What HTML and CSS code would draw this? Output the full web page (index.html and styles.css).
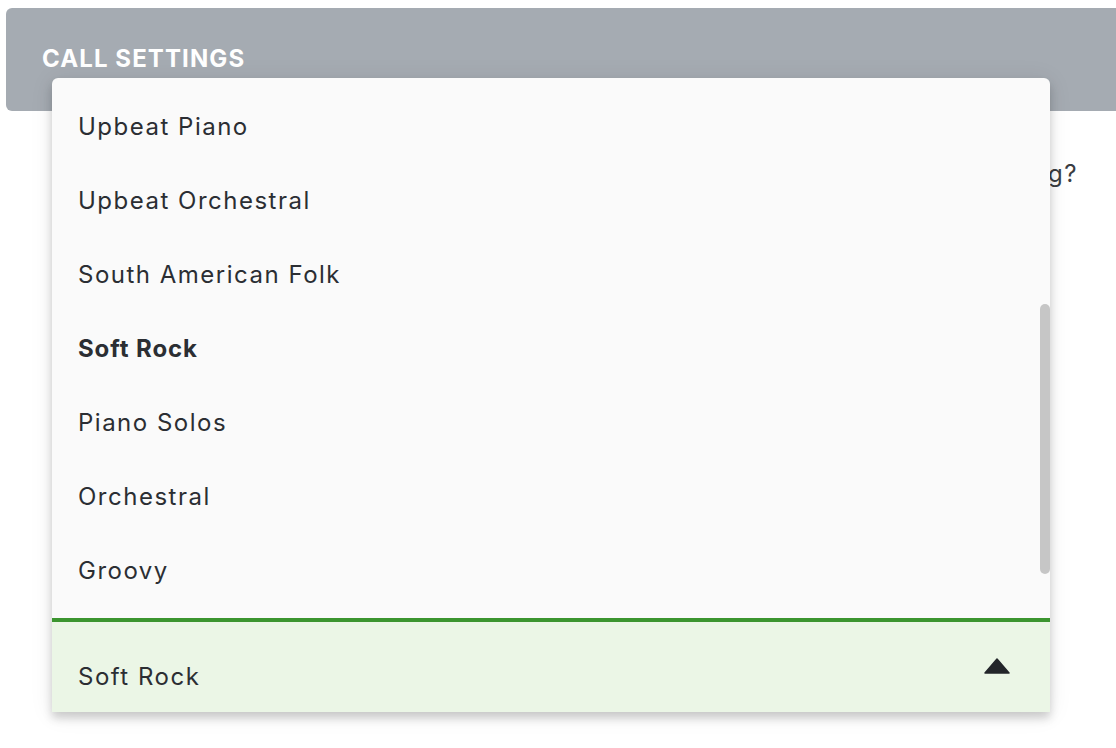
FILE: index.html
```html
<!DOCTYPE html>
<html>
<head>
<meta charset="utf-8">
<link rel="stylesheet" href="styles.css">
</head>
<body>
<div class="page">
  <div class="header"><h1 class="title">CALL SETTINGS</h1></div>
  <div class="content">
    <p class="question">Which hold music would you like callers to hear while waiting?</p>
    <div class="dropdown">
      <ul class="options">
        <li class="option">Upbeat Piano</li>
        <li class="option">Upbeat Orchestral</li>
        <li class="option">South American Folk</li>
        <li class="option selected">Soft Rock</li>
        <li class="option">Piano Solos</li>
        <li class="option">Orchestral</li>
        <li class="option">Groovy</li>
      </ul>
      <div class="thumb"></div>
      <div class="field">
        <span class="value">Soft Rock</span>
        <svg class="caret" width="26" height="16" viewBox="0 0 26 16"><path d="M13 1 L25 15 L1 15 Z" fill="#23262a" stroke="#23262a" stroke-width="1.5" stroke-linejoin="round"/></svg>
      </div>
    </div>
  </div>
</div>
</body>
</html>
```
FILE: styles.css
```css
* { box-sizing: border-box; }
html, body { margin: 0; padding: 0; background: #fff; }
body { font-family: Inter, "DejaVu Sans", sans-serif; color: #2b2e33; }
.page { width: 1116px; height: 748px; overflow: hidden; padding-top: 8px; padding-left: 6px; }
.header {
  height: 103px;
  background: #a5abb2;
  border-radius: 6px 0 0 6px;
  padding: 36px 0 0 36px;
}
.title { margin: 0; font-size: 24px; font-weight: 700; color: #fff; letter-spacing: 1.1px; line-height: 30px; }
.content { position: relative; }
.question {
  margin: 0; padding: 48px 38px 0 0; text-align: right;
  font-size: 24px; letter-spacing: 1.5px; color: #3a3d42; line-height: 30px; white-space: nowrap;
}
.dropdown {
  position: absolute; left: 46px; top: -33px; width: 998px; height: 634px;
  background: #fafafa; border-radius: 6px 6px 0 0;
  box-shadow: 0 6px 10px rgba(0,0,0,0.18), 0 2px 24px rgba(0,0,0,0.08);
  display: flex; flex-direction: column; overflow: hidden;
}
.options { list-style: none; margin: 0; padding: 11px 0 0 0; height: 540px; flex: none; }
.option {
  height: 74px; display: flex; align-items: center; padding-left: 26px;
  font-size: 24px; letter-spacing: 1.5px; color: #2b2e33; font-weight: 400;
}
.option.selected { font-weight: 700; letter-spacing: 0.9px; }
.thumb { position: absolute; right: 0; top: 226px; width: 10px; height: 270px; background: #c6c6c6; border-radius: 5px; }
.field {
  flex: 1; background: #ebf6e6; border-top: 4px solid #3b952f;
  display: flex; align-items: center; justify-content: space-between;
  padding: 0 40px 0 26px;
}
.value { font-size: 24px; letter-spacing: 1.5px; color: #2b2e33; padding-top: 18px; }
.caret { display: block; margin-bottom: 2px; }
```
